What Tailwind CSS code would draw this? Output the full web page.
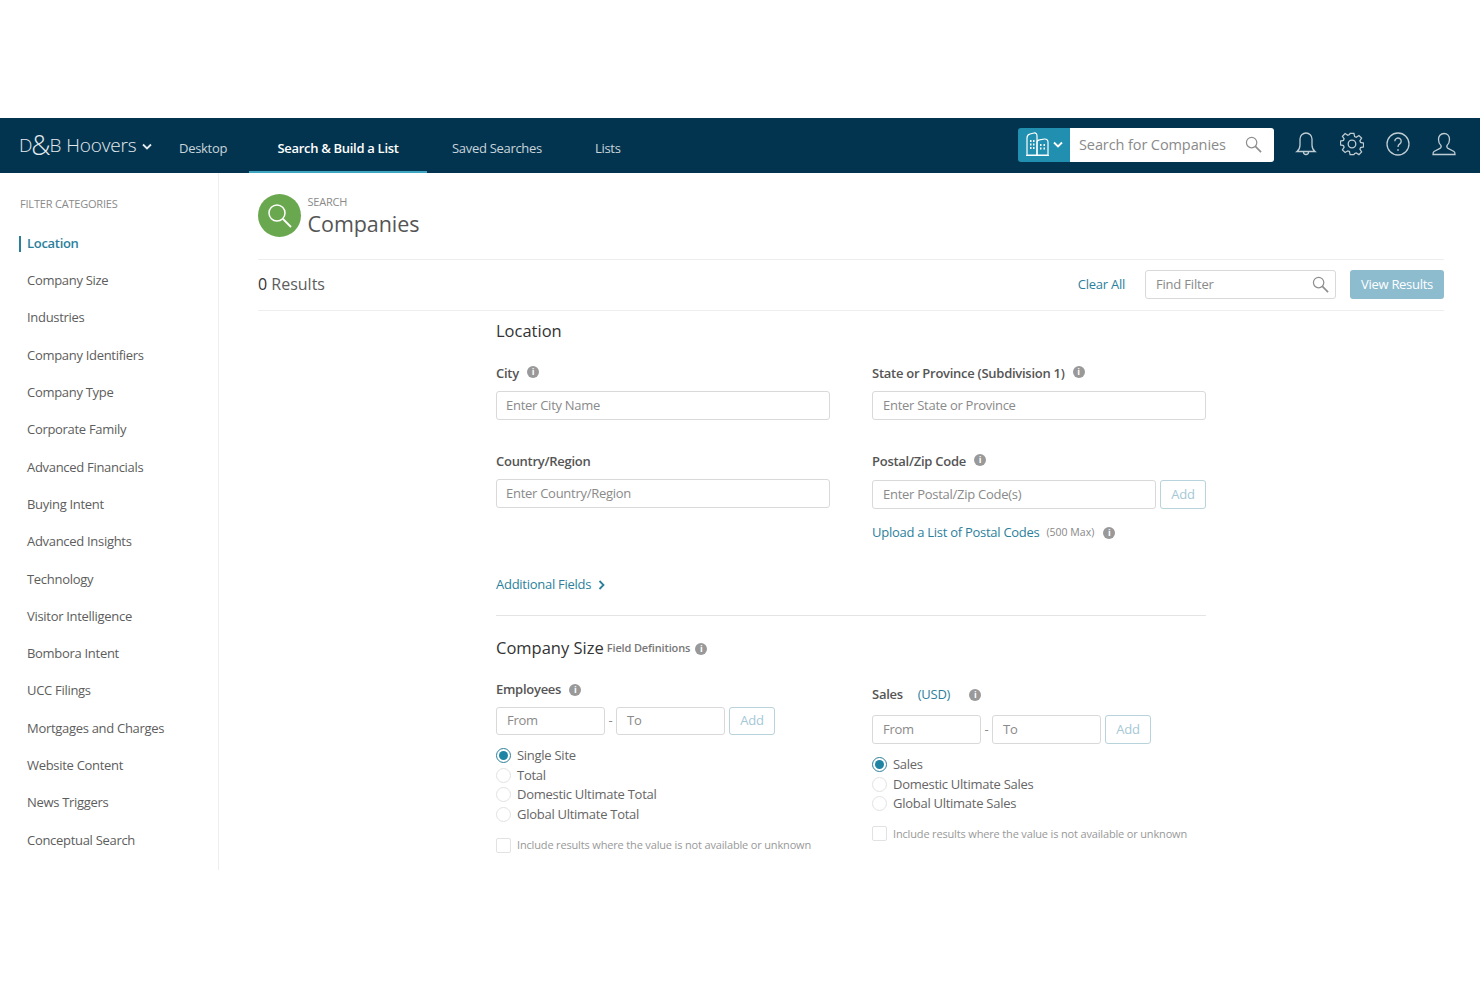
<!DOCTYPE html>
<html>

<head>
    <meta charset="utf-8">
    <title>D&amp;B Hoovers - Search</title>
    <script src="https://cdn.jsdelivr.net/npm/@tailwindcss/browser@4"></script>
</head>

<body class="bg-white font-['Open_Sans',sans-serif] text-[#5d5d5d] h-[987px] overflow-hidden">

    <div class="h-[118px]"></div>

    <!-- top nav -->
    <nav class="h-[55px] bg-[#03344f] flex items-stretch text-[13px] text-[#c9d5dc]">
        <div class="flex items-center w-[179px] pl-[19px] text-[#e3eaee]">
            <span class="text-[19px] font-light whitespace-nowrap flex items-center tracking-[-0.15px]">D<span class="text-[27px] leading-none mx-[-1px] mt-[-3px]">&amp;</span>B<span class="ml-[5px]">Hoovers</span></span>
            <svg class="w-[10px] h-[7px] ml-[6px] mt-[2px]" viewBox="0 0 10 7" fill="none" stroke="currentColor" stroke-width="1.8"><path d="M1 1.5 5 5.5 9 1.5" /></svg>
        </div>
        <a class="flex items-center pt-[6px] w-[70px] tracking-[-0.3px]">Desktop</a>
        <a class="flex items-center justify-center pt-[8px] w-[178px] font-semibold text-white border-b-2 border-[#3ea6c0] tracking-[-0.3px]">Search &amp; Build a List</a>
        <a class="flex items-center pt-[6px] ml-[25px] w-[143px] tracking-[-0.3px]">Saved Searches</a>
        <a class="flex items-center pt-[6px] tracking-[-0.3px]">Lists</a>

        <div class="ml-auto flex items-center">
            <div class="flex h-[34px] w-[256px] mt-[-2px] rounded-[3px] overflow-hidden">
                <div class="w-[52px] bg-[#2190b0] flex items-center pl-[7px] gap-[2px] text-white">
                    <svg class="w-[26px] h-[25px]" viewBox="0 0 26 25" fill="none" stroke="currentColor" stroke-width="1.200">
                        <path d="M2 23V6c0-2 1-3.500 3-4l4-1c2-.3 3 1 3 3v19z" />
                        <path d="M12 23V10.500c0-1.500 1-2.500 2.500-2.700l5-.8c2-.2 3.500 1 3.500 3V23z" />
                        <path d="M1 23.500h23" />
                        <path d="M5 9h1.500M8 9h1.500M5 12.500h1.500M8 12.500h1.500M5 16h1.500M8 16h1.500M15 13h1.500M18.500 13h1.500M15 16.500h1.500M18.500 16.500h1.500" stroke-width="2" />
                    </svg>
                    <svg class="w-[10px] h-[7px]" viewBox="0 0 10 7" fill="none" stroke="currentColor" stroke-width="1.800"><path d="M1 1.500 5 5.500 9 1.500" /></svg>
                </div>
                <div class="flex-1 bg-white flex items-center pl-[9px] text-[14.5px] text-[#8a8a8a] tracking-[-0.1px]">
                    <span class="whitespace-nowrap">Search for Companies</span>
                    <svg class="w-[17px] h-[17px] ml-[19px] text-[#8f8f8f]" viewBox="0 0 18 18" fill="none" stroke="currentColor" stroke-width="1.300"><circle cx="7" cy="7" r="5.500" /><path d="m11 11 6 6" stroke-width="1.800" /></svg>
                </div>
            </div>

            <div class="flex items-center gap-[22px] ml-[20px] mr-[24px] mt-[-3px] text-[#bfccd3]">
                <svg class="w-[24px] h-[26px]" viewBox="0 0 24 26" fill="none" stroke="currentColor" stroke-width="1.300">
                    <path d="M3 20.500c2-1.500 3-3.500 3-6.500V8a6 6 0 0 1 12 0v6c0 3 1 5 3 6.500z" /><path d="M9.500 21a2.500 2.500 0 0 0 5 0" />
                </svg>
                <svg class="w-[24px] h-[24px]" viewBox="0 0 24 24" fill="none" stroke="currentColor" stroke-width="1.300">
                    <circle cx="12" cy="12" r="3.800" />
                    <path d="M10 1h4l.7 3.200 1.700.7 2.800-1.800 2.800 2.800-1.800 2.800.7 1.700 3.100.6v4l-3.100.7-.7 1.700 1.800 2.800-2.800 2.800-2.800-1.800-1.700.7L14 23h-4l-.7-3.200-1.700-.7-2.800 1.800L2 18.100l1.800-2.800-.7-1.700L0 13V9l3.100-.7.7-1.700L2 3.900l2.800-2.800 2.800 1.800 1.700-.7z" transform="translate(.5 .5) scale(.96)" />
                </svg>
                <svg class="w-[24px] h-[24px]" viewBox="0 0 24 24" fill="none" stroke="currentColor" stroke-width="1.300">
                    <circle cx="12" cy="12" r="11" /><path d="M8.800 9.200a3.200 3.200 0 1 1 5 2.700c-1.200.8-1.800 1.500-1.800 3" /><path d="M12 17.300v1.400" stroke-width="1.600" />
                </svg>
                <svg class="w-[24px] h-[24px]" viewBox="0 0 24 24" fill="none" stroke="currentColor" stroke-width="1.300">
                    <path d="M12 1.500c-3.500 0-5.500 2.700-5.500 6 0 2.500 1 4.700 2.500 6 .5 1.500 0 2.500-1.500 3.200L2 19.500c-.8.500-1 1.500-1 3h22c0-1.500-.2-2.500-1-3l-5.500-2.800c-1.500-.7-2-1.700-1.500-3.200 1.500-1.300 2.500-3.500 2.500-6 0-3.300-2-6-5.500-6z" />
                </svg>
            </div>
        </div>
    </nav>

    <div class="flex">
        <!-- filter categories -->
        <aside class="w-[219px] h-[697px] shrink-0 border-r border-[#eeeeee] pl-[19px] pt-[24px]">
            <h3 class="text-[11px] leading-[14px] text-[#8a8a8a] tracking-[-0.2px] mb-[14px] pl-[1px]">FILTER CATEGORIES</h3>
            <ul class="text-[13px] tracking-[-0.3px]">
                <li class="h-[37.300px] flex items-center font-semibold text-[#2c7f9c]">
                    <span class="h-[16px] w-[2px] bg-[#2c7f9c] mr-[6px]"></span>Location
                </li>
                <li class="h-[37.300px] flex items-center pl-[8px]">Company Size</li>
                <li class="h-[37.300px] flex items-center pl-[8px]">Industries</li>
                <li class="h-[37.300px] flex items-center pl-[8px]">Company Identifiers</li>
                <li class="h-[37.300px] flex items-center pl-[8px]">Company Type</li>
                <li class="h-[37.300px] flex items-center pl-[8px]">Corporate Family</li>
                <li class="h-[37.300px] flex items-center pl-[8px]">Advanced Financials</li>
                <li class="h-[37.300px] flex items-center pl-[8px]">Buying Intent</li>
                <li class="h-[37.300px] flex items-center pl-[8px]">Advanced Insights</li>
                <li class="h-[37.300px] flex items-center pl-[8px]">Technology</li>
                <li class="h-[37.300px] flex items-center pl-[8px]">Visitor Intelligence</li>
                <li class="h-[37.300px] flex items-center pl-[8px]">Bombora Intent</li>
                <li class="h-[37.300px] flex items-center pl-[8px]">UCC Filings</li>
                <li class="h-[37.300px] flex items-center pl-[8px]">Mortgages and Charges</li>
                <li class="h-[37.300px] flex items-center pl-[8px]">Website Content</li>
                <li class="h-[37.300px] flex items-center pl-[8px]">News Triggers</li>
                <li class="h-[37.300px] flex items-center pl-[8px]">Conceptual Search</li>
            </ul>
        </aside>

        <main class="w-[1186px] ml-[39px]">
            <!-- page title -->
            <div class="h-[87px] pt-[21px] flex border-b border-[#eeeeee]">
                <div class="w-[43px] h-[43px] rounded-full bg-[#6aa84f] flex items-center justify-center">
                    <svg class="w-[27px] h-[27px] text-white" viewBox="0 0 27 27" fill="none" stroke="currentColor" stroke-width="1.500"><circle cx="11" cy="11" r="8" /><path d="m17 17 8 8" stroke-width="1.800" /></svg>
                </div>
                <div class="ml-[6.500px]">
                    <div class="text-[11px] leading-[14px] mt-[1px] text-[#8a8a8a] tracking-[-0.2px]">SEARCH</div>
                    <h1 class="text-[21.500px] leading-[30px] text-[#555] tracking-[-0.05px]">Companies</h1>
                </div>
            </div>

            <!-- results bar -->
            <div class="h-[51px] pb-[1px] flex items-center border-b border-[#eeeeee]">
                <span class="text-[16px] mt-[-1px]"><span class="text-[#333]">0</span> Results</span>
                <a class="ml-auto text-[13px] text-[#2c7f9c] tracking-[-0.25px]">Clear All</a>
                <div class="ml-[20px] w-[191px] h-[29px] border border-[#d9d9d9] rounded-[3px] flex items-center pl-[10px] pr-[6px] text-[13px] text-[#8a8a8a] tracking-[-0.2px]">
                    Find Filter
                    <svg class="w-[17px] h-[17px] ml-auto text-[#8f8f8f]" viewBox="0 0 18 18" fill="none" stroke="currentColor" stroke-width="1.300"><circle cx="7" cy="7" r="5.500" /><path d="m11 11 6 6" stroke-width="1.800" /></svg>
                </div>
                <button class="ml-[14px] w-[94px] h-[29px] rounded-[3px] bg-[#8dbccf] text-white text-[13px] tracking-[-0.3px]">View Results</button>
            </div>

            <!-- filter form -->
            <div class="w-[710px] ml-[238px] tracking-[-0.27px]">
                <h2 class="text-[16.500px] leading-[22px] mt-[9px] text-[#333] tracking-normal">Location</h2>

                <div class="grid grid-cols-2 gap-x-[42px] mt-[22px]">
                    <div>
                        <div class="flex items-center h-[20px] text-[13px] font-semibold text-[#555]">
                            City
                            <span class="ml-[8px] mt-[-5px] w-[12px] h-[12px] rounded-full bg-[#999] text-white text-[9px] leading-[12px] text-center font-bold">i</span>
                        </div>
                        <div class="mt-[7px] h-[29px] border border-[#d9d9d9] rounded-[3px] flex items-center pl-[9px] text-[13px] text-[#8a8a8a]">Enter City Name</div>
                    </div>
                    <div>
                        <div class="flex items-center h-[20px] text-[13px] font-semibold text-[#555]">
                            State or Province (Subdivision 1)
                            <span class="ml-[8px] mt-[-5px] w-[12px] h-[12px] rounded-full bg-[#999] text-white text-[9px] leading-[12px] text-center font-bold">i</span>
                        </div>
                        <div class="mt-[7px] h-[29px] border border-[#d9d9d9] rounded-[3px] flex items-center pl-[10px] text-[13px] text-[#8a8a8a]">Enter State or Province</div>
                    </div>

                    <div class="mt-[32px]">
                        <div class="flex items-center h-[20px] text-[13px] font-semibold text-[#555]">Country/Region</div>
                        <div class="mt-[7px] h-[29px] border border-[#d9d9d9] rounded-[3px] flex items-center pl-[9px] text-[13px] text-[#8a8a8a]">Enter Country/Region</div>
                    </div>
                    <div class="mt-[32px]">
                        <div class="flex items-center h-[20px] text-[13px] font-semibold text-[#555]">
                            Postal/Zip Code
                            <span class="ml-[8px] mt-[-4px] w-[12px] h-[12px] rounded-full bg-[#999] text-white text-[9px] leading-[12px] text-center font-bold">i</span>
                        </div>
                        <div class="mt-[8px] flex gap-[4px]">
                            <div class="flex-1 h-[29px] border border-[#d9d9d9] rounded-[3px] flex items-center pl-[10px] text-[13px] text-[#8a8a8a]">Enter Postal/Zip Code(s)</div>
                            <button class="w-[46px] h-[29px] border border-[#b9d3dd] rounded-[3px] text-[13px] text-[#a5c8d6]">Add</button>
                        </div>
                        <div class="mt-[14px] flex items-center h-[20px]">
                            <a class="text-[13px] text-[#2c7f9c]">Upload a List of Postal Codes</a>
                            <span class="ml-[7px] text-[10.500px] text-[#888] tracking-normal">(500 Max)</span>
                            <span class="ml-[9px] w-[12px] h-[12px] rounded-full bg-[#999] text-white text-[9px] leading-[12px] text-center font-bold">i</span>
                        </div>
                    </div>
                </div>

                <a class="flex items-center mt-[32px] text-[13px] text-[#2c7f9c] h-[20px]">
                    Additional Fields
                    <svg class="w-[7px] h-[10px] ml-[7px]" viewBox="0 0 7 10" fill="none" stroke="currentColor" stroke-width="1.800"><path d="M1.500 1 5.500 5 1.500 9" /></svg>
                </a>

                <div class="mt-[20px] border-t border-[#e4e4e4]"></div>

                <div class="flex items-center mt-[20px] h-[24px]">
                    <h2 class="text-[16.500px] text-[#333] tracking-normal">Company Size</h2>
                    <span class="ml-[3px] text-[11px] font-semibold text-[#777] tracking-[-0.15px]">Field Definitions</span>
                    <span class="ml-[5px] mt-[1px] w-[12px] h-[12px] rounded-full bg-[#999] text-white text-[9px] leading-[12px] text-center font-bold">i</span>
                </div>

                <div class="grid grid-cols-2 gap-x-[42px]">
                    <!-- employees -->
                    <div class="pt-[20px]">
                        <div class="flex items-center h-[20px] text-[13px] font-semibold text-[#555]">
                            Employees
                            <span class="ml-[8px] w-[12px] h-[12px] rounded-full bg-[#999] text-white text-[9px] leading-[12px] text-center font-bold">i</span>
                        </div>
                        <div class="mt-[7px] flex items-center text-[13px] text-[#8a8a8a]">
                            <div class="w-[109px] h-[28px] border border-[#d9d9d9] rounded-[3px] flex items-center pl-[10px]">From</div>
                            <span class="w-[11px] text-center">-</span>
                            <div class="w-[109px] h-[28px] border border-[#d9d9d9] rounded-[3px] flex items-center pl-[10px]">To</div>
                            <button class="ml-[4px] w-[46px] h-[28px] border border-[#b9d3dd] rounded-[3px] text-[#a5c8d6]">Add</button>
                        </div>
                        <div class="mt-[11px] text-[13px] text-[#666]">
                            <div class="h-[19.500px] flex items-center gap-[6px]"><span class="w-[15px] h-[15px] rounded-full border border-[#2c7f9c] flex items-center justify-center"><span class="w-[9px] h-[9px] rounded-full bg-[#1f84a3]"></span></span>Single Site</div>
                            <div class="h-[19.500px] flex items-center gap-[6px]"><span class="w-[15px] h-[15px] rounded-full border border-[#e2e2e2]"></span>Total</div>
                            <div class="h-[19.500px] flex items-center gap-[6px]"><span class="w-[15px] h-[15px] rounded-full border border-[#e2e2e2]"></span>Domestic Ultimate Total</div>
                            <div class="h-[19.500px] flex items-center gap-[6px]"><span class="w-[15px] h-[15px] rounded-full border border-[#e2e2e2]"></span>Global Ultimate Total</div>
                        </div>
                        <div class="mt-[13px] flex items-center gap-[6px] text-[11px] text-[#999] tracking-[-0.16px]">
                            <span class="w-[15px] h-[15px] border border-[#e2e2e2] rounded-[2px]"></span>
                            <span class="whitespace-nowrap">Include results where the value is not available or unknown</span>
                        </div>
                    </div>

                    <!-- sales -->
                    <div class="pt-[25px]">
                        <div class="flex items-center h-[20px] text-[13px] font-semibold text-[#555]">
                            Sales
                            <span class="ml-[15px] font-normal text-[#2c7f9c]">(USD)</span>
                            <span class="ml-[19px] w-[12px] h-[12px] rounded-full bg-[#999] text-white text-[9px] leading-[12px] text-center font-bold">i</span>
                        </div>
                        <div class="mt-[10px] flex items-center text-[13px] text-[#8a8a8a]">
                            <div class="w-[109px] h-[29px] border border-[#d9d9d9] rounded-[3px] flex items-center pl-[10px]">From</div>
                            <span class="w-[11px] text-center">-</span>
                            <div class="w-[109px] h-[29px] border border-[#d9d9d9] rounded-[3px] flex items-center pl-[10px]">To</div>
                            <button class="ml-[4px] w-[46px] h-[29px] border border-[#b9d3dd] rounded-[3px] text-[#a5c8d6]">Add</button>
                        </div>
                        <div class="mt-[11px] text-[13px] text-[#666]">
                            <div class="h-[19.500px] flex items-center gap-[6px]"><span class="w-[15px] h-[15px] rounded-full border border-[#2c7f9c] flex items-center justify-center"><span class="w-[9px] h-[9px] rounded-full bg-[#1f84a3]"></span></span>Sales</div>
                            <div class="h-[19.500px] flex items-center gap-[6px]"><span class="w-[15px] h-[15px] rounded-full border border-[#e2e2e2]"></span>Domestic Ultimate Sales</div>
                            <div class="h-[19.500px] flex items-center gap-[6px]"><span class="w-[15px] h-[15px] rounded-full border border-[#e2e2e2]"></span>Global Ultimate Sales</div>
                        </div>
                        <div class="mt-[12px] flex items-center gap-[6px] text-[11px] text-[#999] tracking-[-0.16px]">
                            <span class="w-[15px] h-[15px] border border-[#e2e2e2] rounded-[2px]"></span>
                            <span class="whitespace-nowrap">Include results where the value is not available or unknown</span>
                        </div>
                    </div>
                </div>
            </div>
        </main>
    </div>

</body>

</html>
